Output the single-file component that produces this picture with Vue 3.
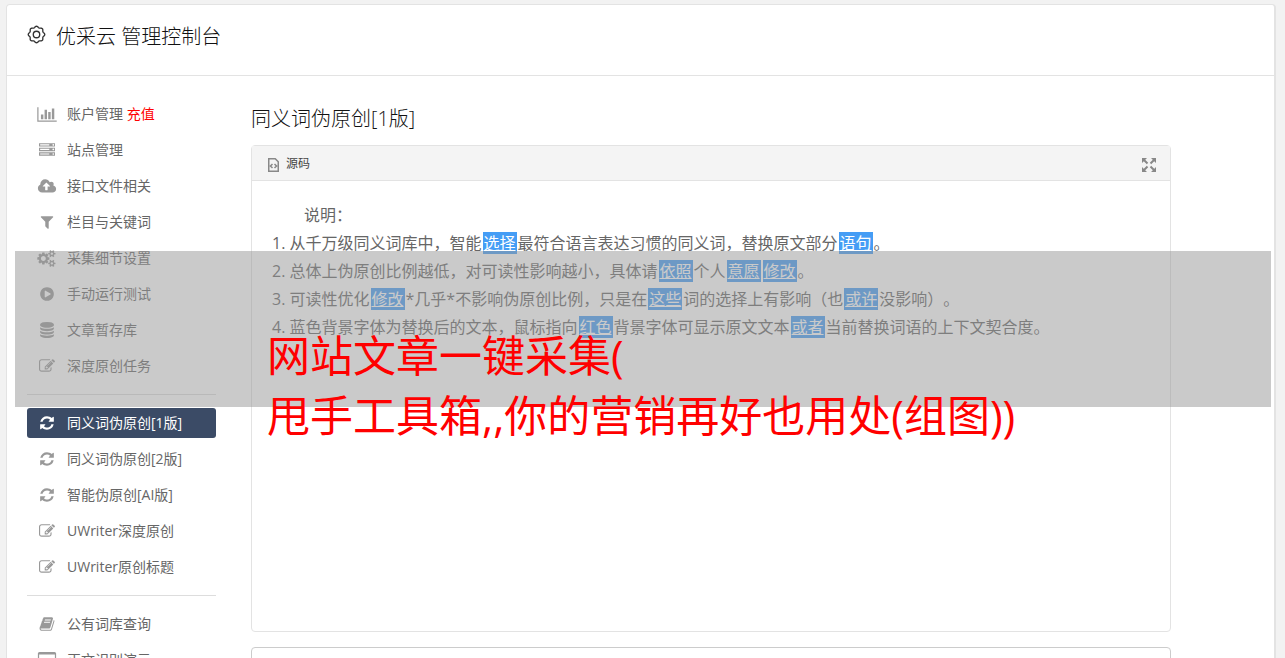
<script setup>
const icons = {
  chart: {
    box: '0 0 2048 1792',
    d: 'M640 896v512h-256v-512h256zm384-512v1024h-256v-1024h256zm1024 1152v128h-2048v-1536h128v1408h1920zm-640-896v768h-256v-768h256zm384-384v1152h-256v-1152h256z',
  },
  server: {
    box: '0 0 1792 1792',
    d: 'M128 1408h1024v-128h-1024v128zm0-512h1024v-128h-1024v128zm1568 448q0-40-28-68t-68-28-68 28-28 68 28 68 68 28 68-28 28-68zm-1568-960h1024v-128h-1024v128zm1568 448q0-40-28-68t-68-28-68 28-28 68 28 68 68 28 68-28 28-68zm0-512q0-40-28-68t-68-28-68 28-28 68 28 68 68 28 68-28 28-68zm96 832v384h-1792v-384h1792zm0-512v384h-1792v-384h1792zm0-512v384h-1792v-384h1792z',
  },
  cloud: {
    box: '0 0 1920 1792',
    d: 'M1280 864q0-14-9-23l-352-352q-9-9-23-9t-23 9l-351 351q-10 12-10 24 0 14 9 23t23 9h224v352q0 13 9.5 22.5t22.5 9.5h192q13 0 22.5-9.5t9.5-22.5v-352h224q13 0 22.5-9.5t9.5-22.5zm640 288q0 159-112.5 271.5t-271.5 112.5h-1088q-185 0-316.5-131.5t-131.5-316.5q0-130 70-240t188-165q-2-30-2-43 0-212 150-362t362-150q156 0 285.5 87t188.5 231q71-62 166-62 106 0 181 75t75 181q0 76-41 138 130 31 213.5 135.5t83.5 238.5z',
  },
  filter: {
    box: '0 0 1792 1792',
    d: 'M1595 295q17 41-14 70l-493 493v742q0 42-39 59-13 5-25 5-27 0-45-19l-256-256q-19-19-19-45v-486l-493-493q-31-29-14-70 17-39 59-39h1280q42 0 59 39z',
  },
  cogs: {
    box: '0 0 1920 1792',
    d: 'M832 896q0-106-75-181t-181-75-181 75-75 181 75 181 181 75 181-75 75-181zm768 512q0-52-38-90t-90-38-90 38-38 90q0 53 37.5 90.5t90.5 37.5 90.5-37.5 37.5-90.5zm0-1024q0-52-38-90t-90-38-90 38-38 90q0 53 37.5 90.5t90.5 37.5 90.5-37.5 37.5-90.5zm-384 421v185q0 10-7 19.5t-16 10.5l-155 24q-11 35-32 76 34 48 90 115 7 11 7 20 0 12-7 19-23 30-82.5 89.5t-78.5 59.5q-11 0-21-7l-115-90q-37 19-77 31-11 108-23 155-7 24-30 24h-186q-11 0-20-7.5t-10-17.5l-23-153q-34-10-75-31l-118 89q-7 7-20 7-11 0-21-8-144-133-144-160 0-9 7-19 10-14 41-53t47-61q-23-44-35-82l-152-24q-10-1-17-9.5t-7-19.5v-185q0-10 7-19.5t16-10.5l155-24q11-35 32-76-34-48-90-115-7-11-7-20 0-12 7-20 22-30 82-89t79-59q11 0 21 7l115 90q34-18 77-32 11-108 23-154 7-24 30-24h186q11 0 20 7.5t10 17.5l23 153q34 10 75 31l118-89q8-7 20-7 11 0 21 8 144 133 144 160 0 8-7 19-12 16-42 54t-45 60q23 48 34 82l152 23q10 2 17 10.5t7 19.5zm640 533v140q0 16-149 31-12 27-30 52 51 113 51 138 0 4-4 7-122 71-124 71-8 0-46-47t-52-68q-20 2-30 2t-30-2q-14 21-52 68t-46 47q-2 0-124-71-4-3-4-7 0-25 51-138-18-25-30-52-149-15-149-31v-140q0-16 149-31 13-29 30-52-51-113-51-138 0-4 4-7 4-2 35-20t59-34 30-16q8 0 46 46.5t52 67.5q20-2 30-2t30 2q51-71 92-112l6-2q4 0 124 70 4 3 4 7 0 25-51 138 17 23 30 52 149 15 149 31zm0-1024v140q0 16-149 31-12 27-30 52 51 113 51 138 0 4-4 7-122 71-124 71-8 0-46-47t-52-68q-20 2-30 2t-30-2q-14 21-52 68t-46 47q-2 0-124-71-4-3-4-7 0-25 51-138-18-25-30-52-149-15-149-31v-140q0-16 149-31 13-29 30-52-51-113-51-138 0-4 4-7 4-2 35-20t59-34 30-16q8 0 46 46.5t52 67.5q20-2 30-2t30 2q51-71 92-112l6-2q4 0 124 70 4 3 4 7 0 25-51 138 17 23 30 52 149 15 149 31z',
  },
  play: {
    box: '0 0 1792 1792',
    d: 'M896 128q209 0 385.5 103t279.5 279.5 103 385.5-103 385.5-279.5 279.5-385.5 103-385.5-103-279.5-279.5-103-385.5 103-385.5 279.5-279.5 385.5-103zm384 823q32-18 32-55t-32-55l-544-320q-31-19-64-1-32 19-32 55v640q0 36 32 55 16 8 32 8 17 0 32-9z',
  },
  database: {
    box: '0 0 1792 1792',
    d: 'M896 768q237 0 443-43t325-127v170q0 69-103 128t-280 93.5-385 34.5-385-34.5-280-93.5-103-128v-170q119 84 325 127t443 43zm0 768q237 0 443-43t325-127v170q0 69-103 128t-280 93.5-385 34.5-385-34.5-280-93.5-103-128v-170q119 84 325 127t443 43zm0-384q237 0 443-43t325-127v170q0 69-103 128t-280 93.5-385 34.5-385-34.5-280-93.5-103-128v-170q119 84 325 127t443 43zm0-1152q208 0 385 34.5t280 93.5 103 128v128q0 69-103 128t-280 93.5-385 34.5-385-34.5-280-93.5-103-128v-128q0-69 103-128t280-93.5 385-34.5z',
  },
  edit: {
    box: '0 0 1792 1792',
    d: 'M888 1184l116-116-152-152-116 116v56h96v96h56zm440-720q-16-16-33 1l-350 350q-17 17-1 33t33-1l350-350q17-17 1-33zm80 594v190q0 119-84.5 203.5t-203.5 84.5h-832q-119 0-203.5-84.5t-84.5-203.5v-832q0-119 84.5-203.5t203.5-84.5h832q63 0 117 25 15 7 18 23 3 17-9 29l-49 49q-14 14-32 8-23-6-45-6h-832q-66 0-113 47t-47 113v832q0 66 47 113t113 47h832q66 0 113-47t47-113v-126q0-13 9-22l64-64q15-15 35-7t20 29zm-96-738l288 288-672 672h-288v-288zm444 132l-92 92-288-288 92-92q28-28 68-28t68 28l152 152q28 28 28 68t-28 68z',
  },
  refresh: {
    box: '0 0 1792 1792',
    d: 'M1639 1056q0 5-1 7-64 268-268 434.5t-478 166.5q-146 0-282.5-55t-243.5-157l-129 129q-19 19-45 19t-45-19-19-45v-448q0-26 19-45t45-19h448q26 0 45 19t19 45-19 45l-137 137q71 66 161 102t187 36q134 0 250-65t186-179q11-17 53-117 8-23 30-23h192q13 0 22.5 9.5t9.5 22.5zm25-800v448q0 26-19 45t-45 19h-448q-26 0-45-19t-19-45 19-45l138-138q-148-137-349-137-134 0-250 65t-186 179q-11 17-53 117-8 23-30 23h-199q-13 0-22.5-9.5t-9.5-22.5v-7q65-268 270-434.5t480-166.5q146 0 284 55.5t245 156.5l130-129q19-19 45-19t45 19 19 45z',
  },
  book: {
    box: '0 0 1792 1792',
    d: 'M1703 478q40 57 18 129l-275 906q-19 64-76.5 107.5t-122.5 43.5h-923q-77 0-148.5-53.5t-99.5-131.5q-24-67-2-127 0-4 3-27t4-37q1-8-3-21.5t-3-19.5q2-11 8-21t16.5-23.5 16.5-23.5q23-38 45-91.5t30-91.5q3-10 .5-30t-.5-28q3-11 17-28t17-23q21-36 42-92t25-90q1-9-2.5-32t.5-28q4-13 22-30.5t22-22.5q19-26 42.5-84.5t27.5-96.5q1-8-3-25.5t-2-26.5q2-8 9-18t18-23 17-21q8-12 16.5-30.5t15-35 16-36 19.5-32 26.5-23.5 36-11.5 47.5 5.5l-1 3q38-9 51-9h761q74 0 114 56t18 130l-274 906q-36 119-71.5 153.5t-128.5 34.5h-869q-27 0-38 15-11 16-1 43 24 70 144 70h923q29 0 56-15.5t35-41.5l300-987q7-22 5-57 38 15 59 43zm-1064 2q-4 13 2 22.5t20 9.5h608q13 0 25.5-9.5t16.5-22.5l21-64q4-13-2-22.5t-20-9.5h-608q-13 0-25.5 9.5t-16.5 22.5zm-83 256q-4 13 2 22.5t20 9.5h608q13 0 25.5-9.5t16.5-22.5l21-64q4-13-2-22.5t-20-9.5h-608q-13 0-25.5 9.5t-16.5 22.5z',
  },
  screen: {
    box: '0 0 1920 1792',
    d: 'M1792 992v-704q0-13-9.5-22.5t-22.5-9.5h-1600q-13 0-22.5 9.5t-9.500 22.5v704q0 13 9.5 22.5t22.5 9.5h1600q13 0 22.5-9.5t9.5-22.5zm128-832v1088q0 66-47 113t-113 47h-544v128h192v128h-896v-128h192v-128h-544q-66 0-113-47t-47-113v-1088q0-66 47-113t113-47h1600q66 0 113 47t47 113z',
  },
}

const groups = [
  [
    { icon: 'chart', text: '账户管理', extra: '充值' },
    { icon: 'server', text: '站点管理' },
    { icon: 'cloud', text: '接口文件相关' },
    { icon: 'filter', text: '栏目与关键词' },
    { icon: 'cogs', text: '采集细节设置' },
    { icon: 'play', text: '手动运行测试' },
    { icon: 'database', text: '文章暂存库' },
    { icon: 'edit', text: '深度原创任务' },
  ],
  [
    { icon: 'refresh', text: '同义词伪原创[1版]', active: true },
    { icon: 'refresh', text: '同义词伪原创[2版]' },
    { icon: 'refresh', text: '智能伪原创[AI版]' },
    { icon: 'edit', text: 'UWriter深度原创' },
    { icon: 'edit', text: 'UWriter原创标题' },
  ],
  [
    { icon: 'book', text: '公有词库查询' },
    { icon: 'screen', text: '正文识别演示' },
  ],
]

// Words wrapped in braces are replaced synonyms, shown as highlighted links.
const lines = [
  '1. 从千万级同义词库中，智能{选择}最符合语言表达习惯的同义词，替换原文部分{语句}。',
  '2. 总体上伪原创比例越低，对可读性影响越小，具体请{依照}个人{意愿}{修改}。',
  '3. 可读性优化{修改}*几乎*不影响伪原创比例，只是在{这些}词的选择上有影响（也{或许}没影响）。',
  '4. 蓝色背景字体为替换后的文本，鼠标指向{红色}背景字体可显示原文文本{或者}当前替换词语的上下文契合度。',
].map((line) =>
  line
    .split(/(\{[^}]+\})/)
    .filter(Boolean)
    .map((t) => (t[0] === '{' ? { word: t.slice(1, -1) } : { text: t })),
)

// Outline of the eight-lobed gear.
const gear =
  Array.from({ length: 96 }, (_, i) => {
    const a = (i / 96) * Math.PI * 2
    const r = 8 + 0.7 * Math.cos(8 * a)
    return `${i ? 'L' : 'M'}${(10 + r * Math.cos(a)).toFixed(2)} ${(10 + r * Math.sin(a)).toFixed(2)}`
  }).join('') + 'Z'
</script>

<template>
  <div class="page">
    <div class="card">
      <header class="top">
        <svg class="gear" viewBox="0 0 20 20" aria-hidden="true">
          <path :d="gear" />
          <circle cx="10" cy="10" r="3.4" />
        </svg>
        <h1>优采云 管理控制台</h1>
      </header>
      <div class="body">
        <nav class="side">
          <ul v-for="(group, g) in groups" :key="g">
            <li v-for="item in group" :key="item.text">
              <a href="#" class="item" :class="{ active: item.active }">
                <svg :viewBox="icons[item.icon].box" :class="{ wide: icons[item.icon].box !== '0 0 1792 1792' }" aria-hidden="true">
                  <path :d="icons[item.icon].d" />
                </svg>
                <span>{{ item.text }}<em v-if="item.extra">&nbsp;{{ item.extra }}</em></span>
              </a>
            </li>
          </ul>
        </nav>
        <main class="main">
          <h2>同义词伪原创[1版]</h2>
          <section class="panel">
            <div class="bar">
              <button type="button" class="source">
                <svg width="11" height="14" viewBox="0 0 11 14" aria-hidden="true">
                  <path d="M.75.75h6.5l3 3v9.5h-9.5zM4.5 6l-2 2 2 2M6.5 6l2 2-2 2" />
                </svg>
                源码
              </button>
              <button type="button" class="full" aria-label="全屏">
                <svg width="14" height="14" viewBox="0 0 14 14" aria-hidden="true">
                  <path class="fill" d="M0 0h5L0 5zM14 0v5L9 0zM0 14V9l5 5zM14 14H9l5-5z" />
                  <path class="line" d="M1.500 1.500l4 4M12.500 1.500l-4 4M1.500 12.500l4-4M12.500 12.500l-4-4" />
                </svg>
              </button>
            </div>
            <div class="doc">
              <p class="lead">说明：</p>
              <p v-for="(line, i) in lines" :key="i">
                <template v-for="(part, k) in line" :key="k"><a v-if="part.word" href="#">{{ part.word }}</a><template v-else>{{ part.text }}</template></template>
              </p>
            </div>
          </section>
          <textarea class="next" aria-label="结果"></textarea>
        </main>
      </div>
    </div>
    <div class="banner">
      <p>网站文章一键采集(<br />甩手工具箱,,你的营销再好也用处(组图))</p>
    </div>
  </div>
</template>

<style>
body {
  background: #f2f2f2;
}
</style>

<style scoped>
* {
  box-sizing: border-box;
}
.page {
  position: relative;
  height: 100vh;
  overflow: hidden;
  padding: 4px 9px 0 6px;
  font-family: 'Open Sans', 'Noto Sans CJK SC', sans-serif;
  text-spacing-trim: space-all;
  color: #666;
}
h1,
h2,
p,
ul {
  margin: 0;
  padding: 0;
}
h1,
h2 {
  font-size: 20px;
  line-height: 32px;
  font-weight: 300;
  color: #111;
}
.card {
  background: #fff;
  border: 1px solid #e3e3e3;
  border-right-width: 2px;
  border-radius: 4px;
}
.top {
  display: flex;
  gap: 10px;
  height: 71px;
  padding: 16px 20px;
  border-bottom: 1px solid #e3e3e3;
}
.gear {
  width: 19px;
  height: 19px;
  margin-top: 4px;
  fill: none;
  stroke: #333;
  stroke-width: 1.4;
}
.body {
  display: flex;
  gap: 35px;
  padding: 23px 103px 0 20px;
}
.side {
  flex: 0 0 189px;
}
.side ul {
  display: flex;
  flex-direction: column;
  gap: 6px;
  list-style: none;
}
.side ul + ul {
  margin-top: 13px;
  padding-top: 13px;
  border-top: 1px solid #ddd;
}
.item {
  display: flex;
  align-items: center;
  gap: 10px;
  height: 30px;
  padding-left: 10px;
  border-radius: 3px;
  font-size: 14px;
  line-height: 30px;
  color: #666;
  text-decoration: none;
}
.item svg {
  flex: none;
  width: 20px;
  height: 16px;
  fill: #999;
}
.item svg.wide {
  height: 17px;
}
.item em {
  font-style: normal;
  color: #f00;
}
.active {
  background: #3b4b66;
  color: #fff;
}
.active svg {
  fill: #fff;
}
.main {
  flex: 1;
  min-width: 0;
}
.main h2 {
  margin: 4px 0 10px;
}
.panel {
  min-height: 487px;
  border: 1px solid #e3e3e3;
  border-radius: 4px;
}
.bar {
  display: flex;
  justify-content: space-between;
  height: 35px;
  padding: 0 14px;
  background: #f4f4f4;
  border-bottom: 1px solid #e3e3e3;
}
.bar button {
  display: flex;
  align-items: center;
  gap: 7px;
  padding: 0;
  border: 0;
  background: none;
  font: inherit;
  font-size: 12px;
  color: #444;
}
.source {
  padding-left: 2px;
}
.source svg {
  margin: 3px 0 0 2px;
  fill: none;
  stroke: #888;
  stroke-width: 1.5;
}
.full svg {
  margin-top: 3px;
}
.full .fill {
  fill: #888;
}
.full .line {
  stroke: #888;
  stroke-width: 2;
}
.doc {
  padding: 20px;
  font-size: 16px;
  line-height: 28px;
}
.lead {
  text-indent: 2em;
}
.doc a {
  margin: 0 1px;
  padding: 0 1px;
  background: #459df5;
  color: #fff;
}
.next {
  display: block;
  width: 100%;
  height: 80px;
  margin-top: 15px;
  border: 1px solid #ccc;
  border-radius: 4px;
  resize: none;
}
.banner {
  position: absolute;
  top: 251px;
  left: 15px;
  right: 14px;
  height: 156px;
  padding: 75px 252px 0;
  background: rgba(150, 150, 150, 0.5);
  pointer-events: none;
}
.banner p {
  font-size: 43px;
  line-height: 60px;
  color: #f00;
  white-space: nowrap;
}
</style>
